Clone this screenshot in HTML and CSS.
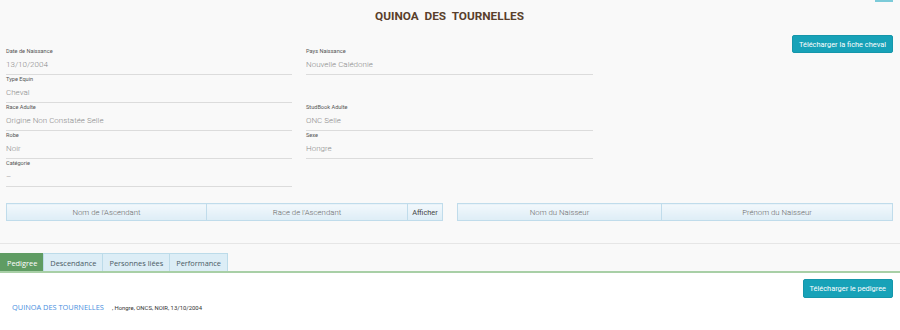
FILE: index.html
```html
<!DOCTYPE html>
<html lang="fr">
<head>
<meta charset="utf-8">
<title>Quinoa des Tournelles</title>
<link rel="stylesheet" href="styles.css">
</head>
<body>
<div class="top">
  <div class="topbar"><span class="stub"></span></div>
  <h1 class="title">QUINOA&nbsp; DES&nbsp; TOURNELLES</h1>
  <div class="info">
    <div class="col">
      <div class="field"><div class="lbl">Date de Naissance</div><div class="val">13/10/2004</div></div>
      <div class="field"><div class="lbl">Type Equin</div><div class="val">Cheval</div></div>
      <div class="field"><div class="lbl">Race Adulte</div><div class="val">Origine Non Constatée Selle</div></div>
      <div class="field"><div class="lbl">Robe</div><div class="val">Noir</div></div>
      <div class="field"><div class="lbl">Catégorie</div><div class="val">–</div></div>
    </div>
    <div class="col">
      <div class="field"><div class="lbl">Pays Naissance</div><div class="val">Nouvelle Calédonie</div></div>
      <div class="field empty"></div>
      <div class="field"><div class="lbl">StudBook Adulte</div><div class="val">ONC Selle</div></div>
      <div class="field"><div class="lbl">Sexe</div><div class="val">Hongre</div></div>
    </div>
    <div class="actions"><button class="btn">Télécharger la fiche cheval</button></div>
  </div>
  <div class="tables">
    <table class="grid left">
      <thead><tr><th class="c1">Nom de l'Ascendant</th><th class="c2">Race de l'Ascendant</th><th class="c3">Afficher</th></tr></thead>
    </table>
    <table class="grid right">
      <thead><tr><th class="d1">Nom du Naisseur</th><th>Prénom du Naisseur</th></tr></thead>
    </table>
  </div>
</div>
<div class="tabbar">
  <ul class="tabs">
    <li class="tab active">Pedigree</li>
    <li class="tab">Descendance</li>
    <li class="tab">Personnes liées</li>
    <li class="tab">Performance</li>
  </ul>
</div>
<div class="panel">
  <div class="panel-actions"><button class="btn">Télécharger le pedigree</button></div>
  <div class="pedigree"><a class="horse">QUINOA DES TOURNELLES</a><span class="meta">, Hongre, ONCS, NOIR, 13/10/2004</span></div>
</div>
</body>
</html>
```
FILE: styles.css
```css
html, body { margin: 0; padding: 0; }
body {
  width: 900px;
  height: 330px;
  overflow: hidden;
  background: #ffffff;
  font-family: Roboto, "Liberation Sans", sans-serif;
  color: #333;
}
.top {
  background: #f9f9f9;
  padding: 0 7px 0 6px;
  height: 243px;
  border-bottom: 1px solid #e6e6e6;
}
.topbar { display: flex; justify-content: flex-end; height: 2px; }
.stub { width: 18px; height: 2px; background: #7ccbd9; }
.title {
  margin: 6px 0 0;
  text-align: center;
  font-size: 11.8px;
  font-weight: 700;
  color: #5a3f2c;
  line-height: 16px;
}
.info {
  display: grid;
  grid-template-columns: 286px 287px 1fr;
  column-gap: 14px;
  margin-top: 11px;
}
.col { padding-top: 12px; }
.field {
  height: 27px;
  border-bottom: 1px solid #dcdcdc;
}
.field.empty { border-bottom-color: transparent; }
.lbl {
  font-size: 5.6px;
  line-height: 8px;
  color: #555;
}
.val {
  font-size: 8px;
  font-weight: 300;
  line-height: 19px;
  color: #8a8a8a;
}
.actions { display: flex; justify-content: flex-end; align-items: flex-start; }
.btn {
  font-family: Roboto, "Liberation Sans", sans-serif;
  font-weight: 400;
  background: #17a2b8;
  color: #ffffff;
  border: 1px solid #1596aa;
  border-radius: 2px;
  font-size: 7.4px;
  height: 18px;
  padding: 0 6px;
  cursor: pointer;
}
.tables {
  display: flex;
  gap: 14px;
  margin-top: 16px;
}
.grid {
  border-collapse: collapse;
  height: 18px;
}
.grid.left { width: 437px; }
.grid.right { width: 436px; }
.grid th {
  font-weight: 300;
  font-size: 7.8px;
  color: #6a6a6a;
  background: linear-gradient(#f2f8fc, #ddedf6);
  border: 1px solid #c0dceb;
  padding: 0;
  height: 16px;
}
.grid th.c1 { width: 199px; }
.grid th.c2 { width: 200px; }
.grid th.c3 { color: #444; font-weight: 400; font-size: 7.4px; }
.grid th.d1 { width: 203px; }
.tabbar {
  background: #f9f9f9;
  padding-top: 9px;
  border-bottom: 2px solid #a8cfa6;
}
.tabs {
  list-style: none;
  margin: 0;
  padding: 0;
  display: flex;
}
.tab {
  font-family: "Open Sans", "Noto Sans", sans-serif;
  font-size: 7.4px;
  color: #4a5a64;
  background: #dcedf6;
  border: 1px solid #bcdbe9;
  border-bottom: none;
  height: 18px;
  line-height: 18px;
  padding: 0 6px;
  box-sizing: border-box;
}
.tab + .tab { margin-left: -1px; }
.tab.active { background: #5f9c63; color: #ffffff; border-color: #5f9c63; }
.panel { background: #ffffff; padding: 6px 7px 0 12px; }
.panel-actions { display: flex; justify-content: flex-end; }
.panel-actions .btn { height: 19px; }
.pedigree {
  margin-top: 4px;
  display: flex;
  align-items: baseline;
}
.horse {
  font-family: "Open Sans", "Noto Sans", sans-serif;
  font-size: 7.4px;
  color: #4a8fe0;
}
.meta {
  font-family: Roboto, "Liberation Sans", sans-serif;
  font-size: 5.9px;
  color: #333;
  margin-left: 8px;
}
```
